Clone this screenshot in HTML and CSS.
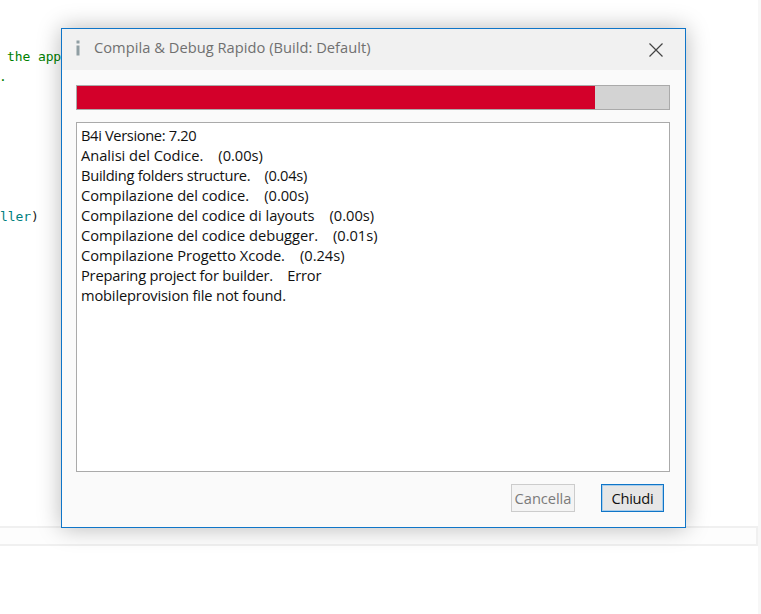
FILE: index.html
```html
<!DOCTYPE html>
<html lang="it">
<head>
<meta charset="utf-8">
<title>Compila &amp; Debug Rapido</title>
<link rel="stylesheet" href="styles.css">
</head>
<body>
<div class="ide">
  <span class="code code-a">the app</span>
  <span class="code code-b">.</span>
  <span class="code code-c">ller<span class="paren">)</span></span>
  <div class="strip"></div>
  <div class="edge"></div>
</div>
<section class="dialog">
  <header class="titlebar">
    <svg class="info" width="6" height="16" viewBox="0 0 6 16"><path d="M1.5 0.5h3v3h-3zM1.5 5.5h3v10h-3z" fill="#8f9ea3"/></svg>
    <h1 class="title">Compila &amp; Debug Rapido (Build: Default)</h1>
    <svg class="close" width="16" height="16" viewBox="0 0 16 16"><path d="M1.5 1.5 14.5 14.5M14.5 1.5 1.5 14.5" stroke="#444" stroke-width="1.2" fill="none"/></svg>
  </header>
  <div class="body">
    <div class="progress"><div class="fill"></div></div>
    <div class="log">
      <div class="tight-l">B4i Versione: 7.20</div>
      <div>Analisi del Codice.&nbsp;&nbsp;&nbsp; (0.00s)</div>
      <div class="tight-m">Building folders structure.&nbsp;&nbsp;&nbsp; (0.04s)</div>
      <div>Compilazione del codice.&nbsp;&nbsp;&nbsp; (0.00s)</div>
      <div>Compilazione del codice di layouts&nbsp;&nbsp;&nbsp; (0.00s)</div>
      <div>Compilazione del codice debugger.&nbsp;&nbsp;&nbsp; (0.01s)</div>
      <div>Compilazione Progetto Xcode.&nbsp;&nbsp;&nbsp; (0.24s)</div>
      <div class="tight-s">Preparing project for builder.&nbsp;&nbsp;&nbsp; Error</div>
      <div class="tight-xs">mobileprovision file not found.</div>
    </div>
    <div class="actions">
      <button class="btn btn-off" type="button">Cancella</button>
      <button class="btn btn-main" type="button">Chiudi</button>
    </div>
  </div>
</section>
</body>
</html>
```
FILE: styles.css
```css
* { box-sizing: border-box; }
html, body { margin: 0; height: 100%; background: #fff; overflow: hidden; }
body { position: relative; font-family: "Open Sans", "Noto Sans", sans-serif; }
.ide { position: absolute; inset: 0; }
.code { position: absolute; left: 0; font: 13px/18px "DejaVu Sans Mono", monospace; white-space: pre; color: #008000; letter-spacing: -0.1px; }
.code-a { left: 7px; top: 48px; }
.code-b { left: -1px; top: 68px; }
.code-c { top: 208px; color: #008080; }
.paren { color: #222; }
.strip { position: absolute; left: 0; top: 526px; width: 758px; height: 20px; background: #fdfdfd; border: 2px solid #f0f0f0; border-left: 0; }
.edge { position: absolute; right: 0; top: 0; bottom: 0; width: 3px; background: #f7f7f7; }
.dialog { position: absolute; left: 61px; top: 28px; width: 625px; height: 500px; display: flex; flex-direction: column; background: #fafafa; border: 1px solid #0f75c8; box-shadow: 0 0 22px rgba(0,0,0,.28); }
.titlebar { height: 41px; flex: none; display: flex; align-items: center; background: #f1f1f1; padding: 0 21px 0 13px; }
.info { flex: none; margin-bottom: 4px; }
.title { flex: 1; margin: 0 0 6px 13px; font-size: 14.67px; font-weight: 400; color: #707070; letter-spacing: 0.03px; }
.close { flex: none; }
.body { flex: 1; display: flex; flex-direction: column; padding: 15px 15px 15px 14px; }
.progress { height: 25px; flex: none; background: #d3d3d3; border: 1px solid #aaa; }
.fill { width: 87.5%; height: 100%; background: #d3002a; }
.log { height: 350px; flex: none; margin-top: 12px; background: #fff; border: 1px solid #aaa; padding: 2px 4px; font-size: 14.67px; line-height: 20px; color: #111; letter-spacing: -0.03px; }
.tight-l { letter-spacing: -0.36px; }
.tight-m { letter-spacing: -0.29px; }
.tight-s { letter-spacing: -0.21px; }
.tight-xs { letter-spacing: -0.16px; }
.actions { display: flex; justify-content: flex-end; gap: 26px; margin-top: 12px; padding-right: 6px; }
.btn { height: 28px; font: 14.67px/1 "Open Sans", "Noto Sans", sans-serif; padding: 0; letter-spacing: -0.05px; }
.btn-off { width: 64px; background: #f4f4f4; border: 1px solid #ccc; color: #7a7a7a; }
.btn-main { width: 63px; background: #e6e6e6; border: 1px solid #0f75c8; box-shadow: inset 0 0 0 1px #a9cdea; color: #111; letter-spacing: -0.25px; }
```
